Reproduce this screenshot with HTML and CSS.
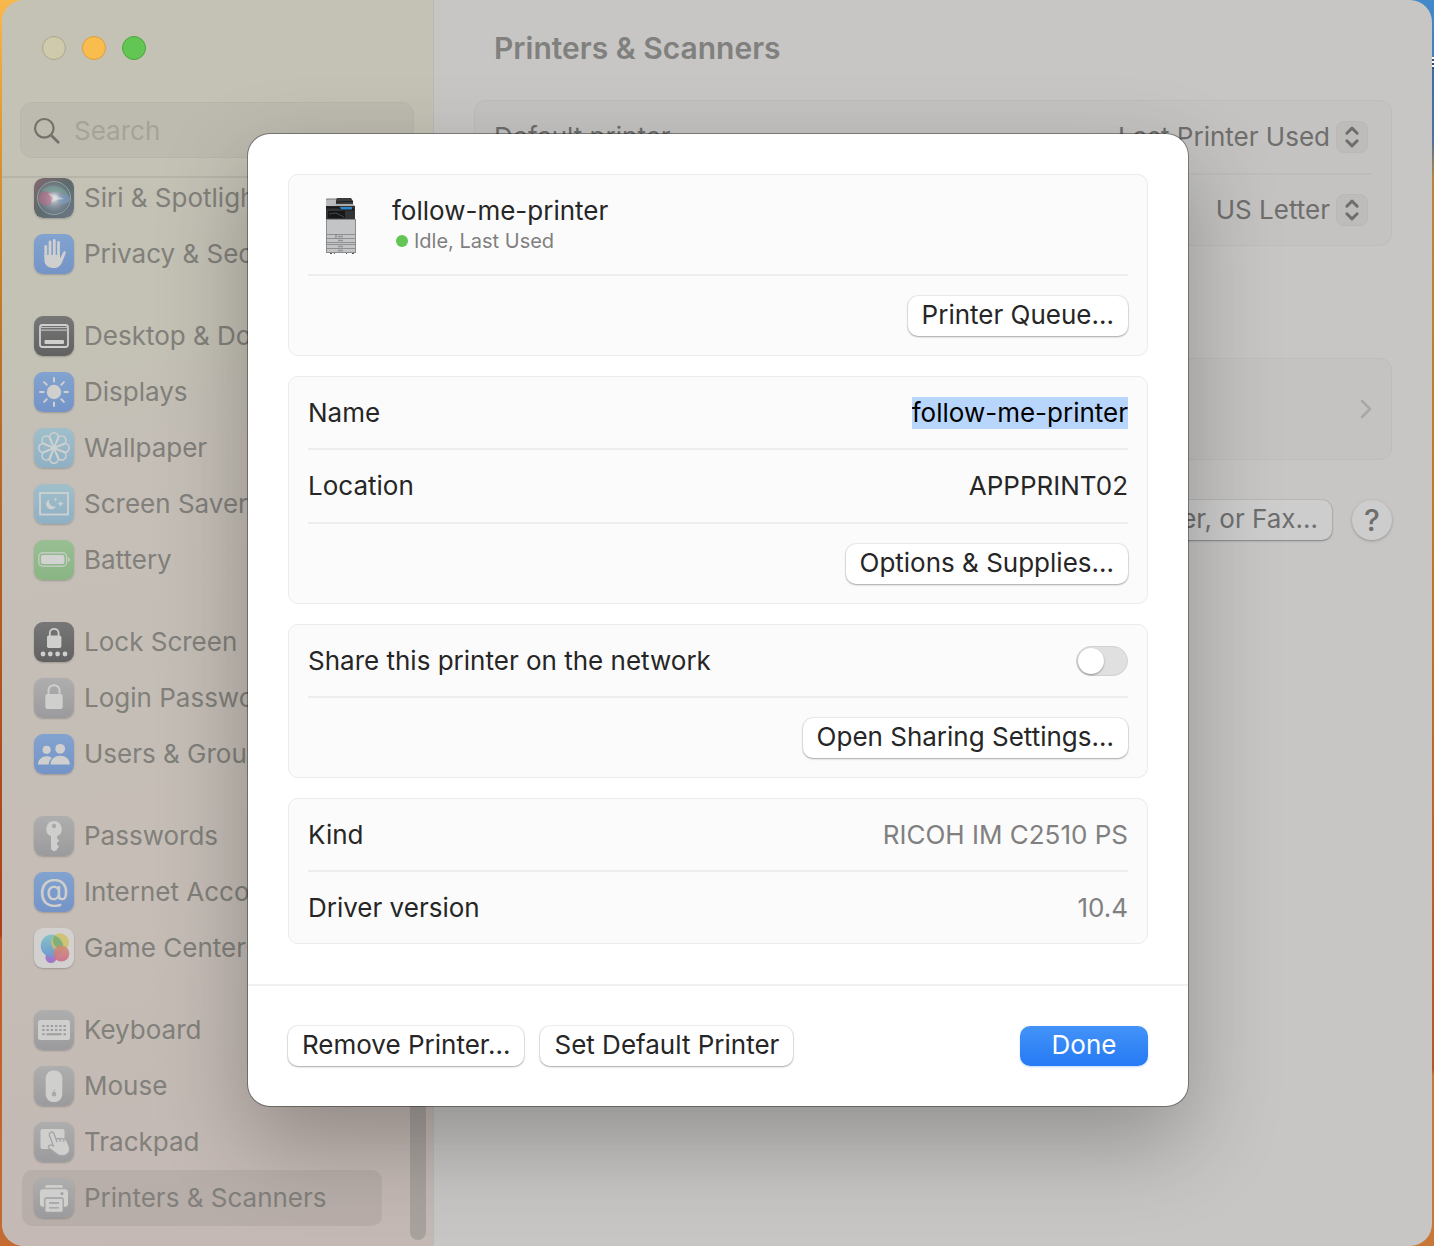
FILE: index.html
```html
<!DOCTYPE html>
<html lang="en">
<head>
	<meta charset="UTF-8">
	<meta name="viewport" content="width=device-width, initial-scale=1">
	<title>Printers &amp; Scanners</title>
	<link rel="stylesheet" href="styles.css">
</head>
<body>
	<div class="window">
		<aside class="sidebar">
			<div class="sidebar-head">
				<div class="lights">
					<button class="light close" aria-label="Close"></button>
					<button class="light minimize" aria-label="Minimize"></button>
					<button class="light zoom" aria-label="Zoom"></button>
				</div>
				<label class="search">
					<svg width="28" height="28" viewBox="0 0 28 28" fill="none" stroke="#73726c" stroke-width="2.2" stroke-linecap="round"><circle cx="11.3" cy="11.3" r="9.3"/><path d="M18.2 18.2l7 7" stroke-width="2.8"/></svg>
					<input type="search" placeholder="Search" aria-label="Search">
				</label>
			</div>
			<nav class="nav">
				<ul>
					<li><a href="#"><svg class="icon" viewBox="0 0 40 40">
						<defs>
							<linearGradient id="siriBg" x1="0" y1="0" x2="1" y2="1"><stop offset="0" stop-color="#84686f"/><stop offset=".5" stop-color="#5d6a6c"/><stop offset="1" stop-color="#6d7888"/></linearGradient>
							<radialGradient id="siriOrb"><stop offset="0" stop-color="#e2e6e6"/><stop offset=".35" stop-color="#9fa8b4"/><stop offset="1" stop-color="#6c7f8c" stop-opacity=".35"/></radialGradient>
						</defs>
						<rect width="40" height="40" rx="9" fill="url(#siriBg)"/>
						<circle cx="20" cy="20" r="16.5" fill="url(#siriOrb)" stroke="#89a5a3" stroke-width="1"/>
						<ellipse cx="12" cy="20.500" rx="7.500" ry="7" fill="#b86a85" opacity=".6"/>
						<ellipse cx="30" cy="21" rx="6" ry="5" fill="#7f9fc4" opacity=".6"/>
						<path d="M7 13q8-7 18-4 8 3 9 9-7-5-13-4-8-1-14-1z" fill="#76a193" opacity=".6"/>
						<path d="M14 15l7 2 9 4-8 1-5 3 1-5z" fill="#dfe4e4" opacity=".6"/>
					</svg>Siri &amp; Spotlight</a></li>
					<li><a href="#"><svg class="icon blue" viewBox="0 0 40 40">
						<g stroke="#cfcfce" stroke-width="2.8" stroke-linecap="round"><path d="M11.800 12.500V23M16 8V22M20.300 6.500V22M24.500 8.500V22"/></g>
						<path d="M10.400 21H26v3.500l3.200-6.300c1-1.800 3.200-.8 2.500 1l-3.600 9C26.500 32 24 34 19.500 34c-5.500 0-9.100-3-9.100-8.500z" fill="#cfcfce"/>
					</svg>Privacy &amp; Security</a></li>
				</ul>
				<ul>
					<li><a href="#"><svg class="icon dark" viewBox="0 0 40 40">
						<rect x="6" y="9" width="28" height="22" rx="2.500" fill="none" stroke="#cfcfce" stroke-width="1.800"/>
						<path d="M6 11.500h28M6 14.200h28" stroke="#bdbdbc" stroke-width="1.200"/>
						<rect x="10.500" y="24" width="19.500" height="4" rx="1" fill="#cfcfce"/>
					</svg>Desktop &amp; Dock</a></li>
					<li><a href="#"><svg class="icon blue" viewBox="0 0 40 40">
						<circle cx="20" cy="20" r="7.200" fill="#cfcfce"/>
						<path d="M20 6v3.600M20 30.400V34M6 20h3.600M30.400 20H34M10.100 10.100l2.600 2.600M27.300 27.300l2.600 2.600M29.900 10.100l-2.600 2.600M12.700 27.300l-2.600 2.600" stroke="#cfcfce" stroke-width="2" stroke-linecap="round"/>
					</svg>Displays</a></li>
					<li><a href="#"><svg class="icon sky" viewBox="0 0 40 40">
						<defs><path id="petal" d="M20 20L16.800 13C15.700 11.200 15.600 10.200 15.600 9.200a4.400 4.400 0 0 1 8.800 0C24.400 10.200 24.300 11.200 23.200 13z"/></defs>
						<g fill="none" stroke="#cfd1d1" stroke-width="1.500">
							<use href="#petal"/><use href="#petal" transform="rotate(45 20 20)"/><use href="#petal" transform="rotate(90 20 20)"/><use href="#petal" transform="rotate(135 20 20)"/><use href="#petal" transform="rotate(180 20 20)"/><use href="#petal" transform="rotate(225 20 20)"/><use href="#petal" transform="rotate(270 20 20)"/><use href="#petal" transform="rotate(315 20 20)"/>
						</g>
					</svg>Wallpaper</a></li>
					<li><a href="#"><svg class="icon sky" viewBox="0 0 40 40">
						<rect x="6" y="9" width="28" height="21.500" fill="none" stroke="#cfd1d1" stroke-width="1.800"/>
						<path d="M15.500 15.200a5.300 5.300 0 1 0 6.800 7 5.200 5.200 0 0 1-6.800-7z" fill="#cfd1d1"/>
						<path d="M21.500 13l.6 1.900 1.900.6-1.900.6-.6 1.900-.6-1.900-1.900-.6 1.900-.6zM26.500 16.500l.9 2.400 2.400.9-2.400.9-.9 2.400-.9-2.400-2.400-.9 2.400-.9z" fill="#cfd1d1"/>
					</svg>Screen Saver</a></li>
					<li><a href="#"><svg class="icon green" viewBox="0 0 40 40">
						<rect x="4.800" y="12.800" width="27.800" height="13.400" rx="4" fill="none" stroke="#c4cbc2" stroke-width="1.400"/>
						<rect x="7" y="15" width="23.400" height="9" rx="2" fill="#d2d3d1"/>
						<path d="M34 17.200c2.600.8 2.600 3.800 0 4.600z" fill="#c4cbc2"/>
					</svg>Battery</a></li>
				</ul>
				<ul>
					<li><a href="#"><svg class="icon dark" viewBox="0 0 40 40">
						<rect x="13" y="13.500" width="14.400" height="12.500" rx="1.800" fill="#cfcfce"/>
						<path d="M15.800 14v-3c0-5.600 8.800-5.600 8.800 0v3" fill="none" stroke="#cfcfce" stroke-width="1.800"/>
						<g fill="#cfcfce"><circle cx="9" cy="32" r="2.400"/><circle cx="16.300" cy="32" r="2.400"/><circle cx="23.600" cy="32" r="2.400"/><circle cx="31" cy="32" r="2.400"/></g>
					</svg>Lock Screen</a></li>
					<li><a href="#"><svg class="icon gray" viewBox="0 0 40 40">
						<rect x="11.300" y="16" width="17.400" height="15" rx="2" fill="#cfcfce"/>
						<path d="M14.500 16.500v-4c0-7 11-7 11 0v4" fill="none" stroke="#cfcfce" stroke-width="1.900"/>
					</svg>Login Password</a></li>
					<li><a href="#"><svg class="icon blue" viewBox="0 0 40 40" fill="#cfcfce">
						<circle cx="12.600" cy="15.800" r="4.100"/><circle cx="26.200" cy="14.800" r="4.900"/>
						<path d="M4 30.500c0-5 4-8.300 8.600-8.300 2 0 3.800.6 5.300 1.700-1.900 1.700-3 3.800-3.200 6.600z"/>
						<path d="M16.600 30.500c0-5.500 4.400-8.700 9.600-8.700s9.600 3.200 9.600 8.700z"/>
					</svg>Users &amp; Groups</a></li>
				</ul>
				<ul>
					<li><a href="#"><svg class="icon gray" viewBox="0 0 40 40">
						<path d="M20 5a8 8 0 0 1 3 15.300v2.200l2.200 2.200-2.200 2.300v1.600l2 2-2 2.300v.8L20 35.500l-3-2.500V20.300A8 8 0 0 1 20 5zm0 2.800a2.200 2.200 0 1 0 0 4.400 2.200 2.200 0 0 0 0-4.400z" fill="#cfcfce"/>
					</svg>Passwords</a></li>
					<li><a href="#"><svg class="icon blue" viewBox="0 0 40 40">
						<text class="at" x="20" y="29" text-anchor="middle">@</text>
					</svg>Internet Accounts</a></li>
					<li><a href="#"><svg class="icon white" viewBox="0 0 40 40">
						<defs>
							<linearGradient id="gcBlue" x1="0" y1="0" x2="0" y2="1"><stop offset="0" stop-color="#86c3c6"/><stop offset="1" stop-color="#6f98d0"/></linearGradient>
							<linearGradient id="gcRed" x1="0" y1="0" x2="0" y2="1"><stop offset="0" stop-color="#cf8f72"/><stop offset="1" stop-color="#cc6b8a"/></linearGradient>
						</defs>
						<circle cx="17" cy="29.500" r="5.500" fill="#a078c8"/>
						<circle cx="18" cy="17.800" r="11.300" fill="url(#gcBlue)"/>
						<circle cx="26" cy="14.300" r="9" fill="#d0bf62" opacity=".8"/>
						<path d="M20 8a11.300 11.300 0 0 1 9 13 9 9 0 0 1-9-13z" fill="#7fb07c"/>
						<circle cx="27.300" cy="25.500" r="8" fill="url(#gcRed)" opacity=".9"/>
					</svg>Game Center</a></li>
				</ul>
				<ul>
					<li><a href="#"><svg class="icon gray" viewBox="0 0 40 40">
						<rect x="4" y="10" width="32" height="20" rx="2.500" fill="#cfcfce"/>
						<path d="M8.200 16h24M8.200 20h24" stroke="#9e9ea0" stroke-width="2.200" stroke-dasharray="2.400 1.850"/>
						<path d="M8.200 24.200h2.400M12.500 24.200h15M29.500 24.200h2.400" stroke="#9e9ea0" stroke-width="2"/>
					</svg>Keyboard</a></li>
					<li><a href="#"><svg class="icon gray" viewBox="0 0 40 40">
						<rect x="11.700" y="4.500" width="16.600" height="31.500" rx="7.500" fill="#cfcfce"/>
						<ellipse cx="20" cy="28" rx="2.300" ry="2.500" fill="#a8a8aa"/><path d="M20 25.500q0-1.500 1.400-2" stroke="#a8a8aa" fill="none"/>
					</svg>Mouse</a></li>
					<li><a href="#"><svg class="icon gray" viewBox="0 0 40 40">
						<rect x="6.500" y="7" width="24" height="20" rx="2" fill="#cfcfce"/>
						<path d="M16.500 10.500c1.500-1 3-.3 3.500 1.200l2.200 6c.8-1.500 2.800-1.600 3.500-.4.900-1.200 2.900-1.200 3.600.2 1.200-.9 3-.4 3.500 1.100l2.300 5.400c1.500 4-.3 7.500-3.500 9-3.600 1.500-6.600.8-9.400-1.600l-7.200-5.200c-1.700-1.600 0-3.600 2-3l2.400.8-4.100-10.700c-.4-1.100.3-2.300 1.200-2.800z" fill="#cfcfce" stroke="#a4a4a6" stroke-width="1.300"/>
						<path d="M22.200 17.700l.9 2.500M25.800 17.500l.9 2.400M29.400 17.800l.8 2.200" stroke="#a4a4a6" stroke-width="1.200"/>
					</svg>Trackpad</a></li>
					<li class="selected"><a href="#" aria-current="page"><svg class="icon gray" viewBox="0 0 40 40">
						<path d="M11 9.700c0-2 1-2.700 2.500-2.700h13c1.500 0 2.500.7 2.500 2.700z" fill="#cfcfce"/>
						<rect x="6" y="11.300" width="28" height="17.500" rx="3" fill="#cfcfce"/>
						<circle cx="28" cy="15.500" r="1.500" fill="#a0a0a2"/>
						<rect x="10.800" y="20" width="18.400" height="14.500" rx="1.800" fill="#cfcfce" stroke="#a0a0a2" stroke-width="1.300"/>
						<path d="M15 25h10M15 29.800h10" stroke="#a0a0a2" stroke-width="1.300"/>
					</svg>Printers &amp; Scanners</a></li>
				</ul>
			</nav>
			<div class="scrollbar"></div>
		</aside>
		<main class="panel">
			<h1>Printers &amp; Scanners</h1>
			<section class="group">
				<div class="setting">
					<label for="default-printer">Default printer</label>
					<span class="popup">
						<select id="default-printer"><option>Last Printer Used</option></select>
						<svg viewBox="0 0 32 32"><path d="M10.500 12L16 6.500 21.500 12M10.500 20l5.500 5.500L21.500 20"/></svg>
					</span>
				</div>
				<div class="setting">
					<span class="popup">
						<select aria-label="Default paper size"><option>US Letter</option></select>
						<svg viewBox="0 0 32 32"><path d="M10.500 12L16 6.500 21.500 12M10.500 20l5.500 5.500L21.500 20"/></svg>
					</span>
				</div>
			</section>
			<a class="group printer-link" href="#" aria-label="follow-me-printer">
				<svg width="12" height="20" viewBox="0 0 12 20"><path d="M2 2l8 8-8 8" fill="none" stroke="#a9a8a6" stroke-width="2.600" stroke-linecap="round" stroke-linejoin="round"/></svg>
			</a>
			<div class="panel-actions">
				<button class="btn dimmed">Add Printer, Scanner, or Fax…</button>
				<button class="help" aria-label="Help">?</button>
			</div>
		</main>
	</div>

	<div class="overlay">
		<div class="sheet" role="dialog" aria-modal="true" aria-label="follow-me-printer">
			<div class="sheet-body">
				<section class="card">
					<div class="row printer">
						<svg class="printer-pic" viewBox="0 0 30 56">
							<path d="M0 2q0-1 1-1h10v8H0z" fill="#b9babd"/>
							<path d="M0 2q0-1 1-1h10" fill="none" stroke="#77787a"/>
							<path d="M11 0h14l2 3v3H10V2z" fill="#3b3c3e"/>
							<path d="M10 4l17-.5" stroke="#1c1d1e"/>
							<path d="M9 6h18l2 2H10z" fill="#a8aaad"/>
							<path d="M0 8h29v13H0z" fill="#333436"/>
							<path d="M0 9.500h13l3 2h12" stroke="#17181a" stroke-width="2" fill="none"/>
							<path d="M14 9h12v2.500H15z" fill="#2f86c4"/>
							<path d="M2 13h17v7H2z" fill="#161718"/>
							<path d="M3 16l7-1 8 4" stroke="#47484a" fill="none"/>
							<rect x=".5" y="21.500" width="29" height="33" fill="#c3c4c6" stroke="#8b8c8e"/>
							<path d="M1 36.500h28M1 40.500h28M1 44.500h28M1 46.500h28M1 50.500h28" stroke="#8f9092"/>
							<path d="M10 36v4" stroke="#77787a"/>
							<path d="M12 38.500h5M12 42.500h5M12 48.500h5M12 52.500h5" stroke="#939496" stroke-width="1.500"/>
							<path d="M4 55.500h2M8 55.500h1M20 55.500h1M26 55.500h2" stroke="#555"/>
						</svg>
						<div>
							<div class="printer-name">follow-me-printer</div>
							<div class="status">Idle, Last Used</div>
						</div>
					</div>
					<div class="row actions"><button class="btn">Printer Queue…</button></div>
				</section>
				<section class="card">
					<div class="row">
						<label for="name">Name</label>
						<input class="field highlighted" id="name" type="text" value="follow-me-printer">
					</div>
					<div class="row">
						<label for="location">Location</label>
						<input class="field" id="location" type="text" value="APPPRINT02">
					</div>
					<div class="row actions"><button class="btn">Options &amp; Supplies…</button></div>
				</section>
				<section class="card">
					<div class="row">
						<label for="share">Share this printer on the network</label>
						<input class="switch" id="share" type="checkbox" role="switch">
					</div>
					<div class="row actions"><button class="btn">Open Sharing Settings…</button></div>
				</section>
				<section class="card">
					<div class="row"><span>Kind</span><span class="value">RICOH IM C2510 PS</span></div>
					<div class="row"><span>Driver version</span><span class="value">10.4</span></div>
				</section>
			</div>
			<footer class="sheet-foot">
				<button class="btn">Remove Printer…</button>
				<button class="btn">Set Default Printer</button>
				<button class="btn primary">Done</button>
			</footer>
		</div>
	</div>
</body>
</html>
```
FILE: styles.css
```css
* {box-sizing: border-box;}
body {
	margin: 0;
	padding: 0 2px;
	position: relative;
	font: 26px/32px Inter, "Liberation Sans", sans-serif;
	color: #262626;
	/* desktop picture showing at both window edges */
	background:
		linear-gradient(#4388c8, #3f82c4 57px, #fff 57px, #fff 59px, #2a4a70 59px, #2a4a70 61px, #fff 61px, #fff 63px, #2a4a70 63px, #2a4a70 65px, #fff 65px, #fff 67px, #2a4a70 67px, #2a4a70 69px, #3c6ea4 69px, #50709a 140px, #b8863c 180px, #c07a28 500px, #b8542a 1070px, #c87836 1075px, #c87836) right / 50% 100% no-repeat,
		linear-gradient(#f9b84c, #e09530 140px, #b87426 350px, #b0521e 700px, #a8401e 935px, #c05a28 940px, #c46c34) left / 50% 100% no-repeat;
}
ul {margin: 0; padding: 0; list-style: none;}
a {color: inherit; text-decoration: none;}
button, input, select {margin: 0; font: inherit; color: inherit;}

.window {
	display: flex;
	min-height: 100vh;
	border-radius: 22px;
	overflow: hidden;
	background: #c7c6c4;
}

/* sidebar */
.sidebar {
	position: relative;
	flex: 0 0 432px;
	min-width: 0;
	padding-bottom: 20px;
	border-right: 1px solid #bab9b4;
	background: linear-gradient(170deg, #c4c2b5 0, #c4c1b5 28%, #c5bfb7 36%, #c5bdb6 70%, #c4b8b4 100%);
}
.sidebar-head {
	position: relative;
	height: 178px;
	padding: 36px 19px 0 18px;
	border-bottom: 2px solid #b7b5aa;
}
.lights {display: flex; gap: 16px; padding-left: 22px; margin-bottom: 42px;}
.light {width: 24px; height: 24px; padding: 0; border: 1px solid; border-radius: 50%;}
.close {background: #cfcaab; border-color: #aaa68c;}
.minimize {background: #f9bd4e; border-color: #dc9e3c;}
.zoom {background: #62c554; border-color: #4ba73f;}
.search {
	display: flex;
	align-items: center;
	gap: 13px;
	height: 56px;
	padding: 2px 12px 0;
	border: 1px solid #b8b6ab;
	border-radius: 12px;
	background: #bdbbaf;
}
.search input {flex: 1; min-width: 0; padding: 0; border: 0; outline: 0; background: none;}
.search input::placeholder {color: #a5a398; opacity: 1;}

/* the list is scrolled a little under the header */
.nav {margin: -8px 51px 0 20px;}
.nav ul + ul {margin-top: 26px;}
.nav a {
	display: flex;
	align-items: center;
	gap: 10px;
	height: 56px;
	padding: 0 12px;
	border-radius: 10px;
	color: #81807b;
	white-space: nowrap;
}
.nav .selected a {background: rgba(0, 0, 0, .06);}
.icon {flex: none; width: 40px; height: 40px; border-radius: 9px; box-shadow: 0 1px 2px rgba(0, 0, 0, .2);}
.blue {background: linear-gradient(#82a2cf, #7494c8);}
.sky {background: linear-gradient(#a0bfcb, #8fb0c4);}
.green {background: linear-gradient(#98bf93, #8ab583);}
.dark {background: linear-gradient(#777, #616161);}
.gray {background: linear-gradient(#aeaeae, #9b9b9d);}
.white {background: #d2d1d0;}
.at {font: 31px Inter, sans-serif; fill: #cfcfce;}
.scrollbar {
	position: absolute;
	top: 660px;
	right: 7px;
	bottom: 6px;
	width: 16px;
	border-radius: 8px;
	background: #a8a29e;
}

/* main panel */
.panel {flex: 1; min-width: 0; padding: 30px 40px;}
h1 {margin: 0 0 34px 20px; font-size: 30px; line-height: 36px; font-weight: 600; color: #80807e;}
.group {border: 1px solid #bebdbb; border-radius: 12px; background: #c4c3c1; padding: 0 19px;}
.setting {
	display: flex;
	align-items: center;
	height: 72px;
	color: #6e6e6d;
}
.setting + .setting {border-top: 2px solid #bebdbb;}
.popup {display: flex; align-items: center; gap: 6px; margin-left: auto; margin-right: 4px;}
.popup select {appearance: none; padding: 0; border: 0; background: none; text-align: right;}
.popup svg {
	width: 32px;
	height: 32px;
	border: 1px solid #b9b8b6;
	border-radius: 8px;
	background: #bdbcba;
	fill: none;
	stroke: #6e6e6d;
	stroke-width: 3.2;
	stroke-linecap: round;
	stroke-linejoin: round;
}
.printer-link {display: flex; align-items: center; justify-content: flex-end; height: 102px; margin: 112px 0 40px;}
.panel-actions {display: flex; justify-content: flex-end; gap: 20px;}
.help {
	width: 40px;
	height: 40px;
	padding: 0;
	border: 0;
	border-radius: 50%;
	background: #cdcdcd;
	color: #6e6e6d;
	font-size: 30px;
	font-weight: 500;
	box-shadow: 0 1px 3px rgba(0, 0, 0, .25);
}

/* printer sheet */
.overlay {
	position: absolute;
	inset: 0;
	display: flex;
	align-items: flex-start;
	justify-content: center;
	padding: 134px 0 0 2px;
}
.sheet {
	width: 940px;
	border-radius: 22px;
	background: #fff;
	box-shadow: 0 0 0 1px rgba(0, 0, 0, .35), 0 36px 90px rgba(0, 0, 0, .27);
}
.sheet-body {display: grid; gap: 20px; padding: 40px;}
.card {padding: 0 19px; border: 1px solid #ebebeb; border-radius: 10px; background: #fbfbfb;}
.row {
	display: flex;
	align-items: center;
	justify-content: space-between;
	height: 74px;
	border-bottom: 2px solid #ededed;
}
.row:first-child {height: 73px;}
.row:last-child {height: 71px; border-bottom: 0;}
.row.actions {height: 79px; justify-content: flex-end;}
.row.printer {height: 101px; justify-content: flex-start; gap: 36px; padding: 2px 0 0 18px;}
.printer-pic {width: 30px; height: 56px;}
.printer-name, .status {line-height: 30px;}
.status {display: flex; align-items: center; gap: 6px; padding-left: 4px; font-size: 20px; color: #7f7f7f;}
.status::before {content: ""; width: 12px; height: 12px; border-radius: 50%; background: #62c554;}
.value {color: #808080;}
.field {
	field-sizing: content;
	height: 32px;
	padding: 0;
	border: 0;
	outline: 0;
	background: none;
	text-align: right;
}
.highlighted {background: #b8d6fb; color: #000;}
.switch {
	appearance: none;
	display: flex;
	width: 52px;
	height: 30px;
	padding: 1px;
	border: 1px solid #d2d2d2;
	border-radius: 15px;
	background: #e0e0e0;
}
.switch::before {
	content: "";
	width: 26px;
	height: 26px;
	border-radius: 50%;
	background: #fff;
	box-shadow: 0 1px 2px rgba(0, 0, 0, .35);
}
.switch:checked {justify-content: flex-end; background: #2f7ff5;}
.btn {
	height: 40px;
	padding: 0 14px 2px;
	border: 0;
	border-radius: 10px;
	background: #fff;
	line-height: 38px;
	white-space: nowrap;
	box-shadow: 0 0 0 1px rgba(0, 0, 0, .06), 0 1px 2px rgba(0, 0, 0, .3);
}
.dimmed {background: #cdcdcd; color: #6e6e6d;}
.sheet-foot {display: flex; gap: 16px; padding: 40px; border-top: 2px solid #f0f0f0;}
.primary {
	width: 128px;
	margin-left: auto;
	background: linear-gradient(#4393f8, #267af4);
	color: #fff;
	box-shadow: 0 1px 2px rgba(38, 122, 244, .3);
}
```
